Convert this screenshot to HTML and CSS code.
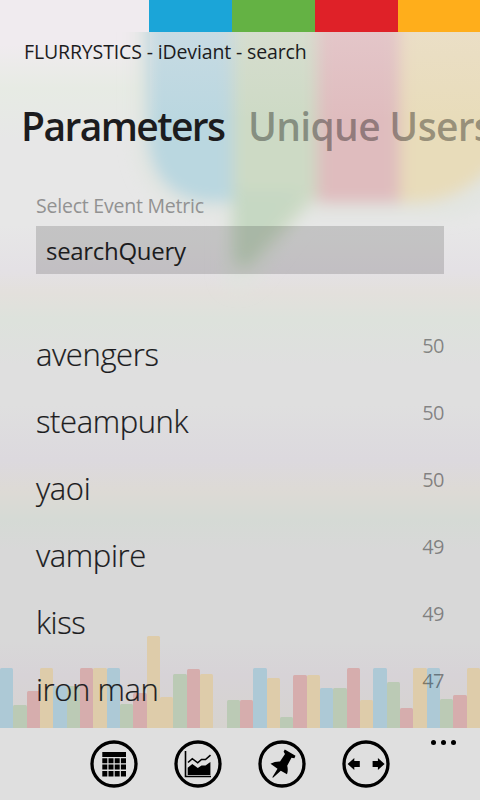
FILE: index.html
```
<!DOCTYPE html>
<html lang="en">
<head>
<meta charset="utf-8">
<title>Flurrystics</title>
<link rel="stylesheet" href="styles.css">
</head>
<body>
<div class="phone">
  <div class="stage">
    <div class="backdrop">
      <svg class="logo" viewBox="0 0 480 310" width="480" height="310" aria-hidden="true">
        <defs>
          <filter id="soft" x="-20%" y="-20%" width="140%" height="140%"><feGaussianBlur stdDeviation="7.5"/></filter>
          <linearGradient id="top" x1="0" y1="0" x2="0" y2="1"><stop offset=".4" stop-color="#f4e8ee" stop-opacity=".25"/><stop offset="1" stop-color="#f4e8ee" stop-opacity="0"/></linearGradient>
        </defs>
        <g filter="url(#soft)">
          <path d="M134 -40H530V150Q500 218 440 218H305L260 278Q236 304 222 280V214H200Q140 205 134 150Z" fill="#dfe4dd" opacity=".6"/>
          <path d="M148 -40H233V202H208Q154 196 148 140Z" fill="#bad7e0"/>
          <path d="M233 -40H317V196L252 264Q238 274 233 257Z" fill="#cddac5"/>
          <path d="M233 190H304L250 262Q238 270 233 252Z" fill="#bfd5c1" opacity=".5"/>
          <path d="M317 -40H400V203H317Z" fill="#dfbcbe"/>
          <path d="M400 -40H530V110Q485 203 412 203H400Z" fill="#e8dcba"/>
        </g>
        <path d="M150 -40H500V120H150Z" fill="url(#top)"/>
      </svg>
      <div class="bars" id="bars"></div>
    </div>
    <div class="content">
      <div class="stripes"><i></i><i class="s-blue"></i><i class="s-green"></i><i class="s-red"></i><i class="s-yellow"></i></div>
      <div class="app-title">FLURRYSTICS - iDeviant - search</div>
      <div class="pivots"><h1 class="pivot">Parameters</h1><span class="pivot next">Unique Users</span></div>
      <div class="field">
        <div class="label">Select Event Metric</div>
        <div class="select">searchQuery</div>
      </div>
      <ul class="list">
        <li><span>avengers</span><b>50</b></li>
        <li><span>steampunk</span><b>50</b></li>
        <li><span>yaoi</span><b>50</b></li>
        <li><span>vampire</span><b>49</b></li>
        <li><span>kiss</span><b>49</b></li>
        <li><span>iron man</span><b>47</b></li>
      </ul>
    </div>
  </div>
  <div class="appbar">
    <svg class="ico" viewBox="0 0 48 48"><circle cx="24" cy="24" r="22"/><path class="f" d="M12.3 12H36v5H12.3zM12.3 18.2h5v5h-5zM18.5 18.2h5v5h-5zM24.7 18.2h5v5h-5zM30.9 18.2H36v5h-5.1zM12.3 24.6h5v5h-5zM18.5 24.6h5v5h-5zM24.7 24.6h5v5h-5zM30.9 24.6H36v5h-5.1zM12.3 31h5v5.5h-5zM18.5 31h5v5.5h-5zM24.7 31h5v5.5h-5zM30.9 31H36v5.5h-5.1z"/></svg>
    <svg class="ico" viewBox="0 0 48 48"><circle cx="24" cy="24" r="22"/><path class="l" d="M11.5 11V36.5H37"/><path class="l" d="M14 22.5L18.3 18.7L23.7 22.8L27.5 19.5H31.5L36.5 15.2"/><path class="f" d="M13.7 35V27.8L18.3 24L23.8 28L27.5 25.5H31.5L36.4 22V35z"/></svg>
    <svg class="ico" viewBox="0 0 48 48"><circle cx="24" cy="24" r="22"/><path class="f" d="M26.8 9.5L37.5 15.7L36.4 18.2L33.5 17.8L29.2 25.7Q30.4 30 29 34.2L22.8 30.8L15 37.8L14.3 37.2L19.5 28.8L12.5 23.8Q17 21.3 22 21.5L27 14L25.6 11.7z"/></svg>
    <svg class="ico" viewBox="0 0 48 48"><circle cx="24" cy="24" r="22"/><path class="f" d="M5.6 24L12.3 18V21H17.8V27H12.3V30zM42.6 24L35.9 18V21H30.6V27H35.9V30z"/></svg>
    <div class="more"><i></i><i></i><i></i></div>
  </div>
</div>
<script src="bars.js"></script>
</body>
</html>
```
FILE: styles.css
```
* { box-sizing: border-box; }
body { margin: 0; font-family: "Open Sans", "Noto Sans", sans-serif; color: #1c1c1e; }
.phone { width: 480px; height: 800px; display: flex; flex-direction: column; overflow: hidden; }
.stage { height: 728px; display: grid; grid-template: 728px / 480px; overflow: hidden; }
.backdrop, .content { grid-area: 1 / 1; min-width: 0; overflow: hidden; }
.backdrop {
  display: flex; flex-direction: column; justify-content: space-between;
  background: linear-gradient(#f0ebef 0, #f0ebef 45px, #e7ebe4 88px, #e7e7e7 140px, #e7e7e7 225px, #e4e1e5 270px, #e3e0dc 293px, #dde2dc 320px, #dfdfdf 365px, #dfdfdf 405px, #dcd9de 460px, #dddad5 492px, #d5dad5 520px, #d8d8d8 550px, #d8d8d8 640px, #d7d3d7 675px, #d6d3cf 728px);
}
.logo { display: block; }
.bars { display: grid; grid-template-columns: repeat(36, 1fr); align-items: end; }
.bar { border-radius: 1.5px 1.5px 0 0; }
.blue { background: #adc9d6; }
.green { background: #bbcab5; }
.red { background: #d6adad; }
.yellow { background: #deccaa; }
.content { display: flex; flex-direction: column; z-index: 1; }
.stripes { height: 32px; flex: none; display: grid; grid-template-columns: 149px 83px 83px 83px 82px; background: #f0ebef; }
.s-blue { background: #1ba5d8; }
.s-green { background: #64b244; }
.s-red { background: #df2128; }
.s-yellow { background: #ffae1b; }
.app-title { height: 40px; padding-left: 24px; font-size: 19.5px; line-height: 40px; letter-spacing: -.14px; white-space: nowrap; }
.pivots { height: 110px; display: flex; gap: 24px; padding: 24px 0 0 21px; white-space: nowrap; }
.pivot { margin: 0; width: 203px; flex: none; font-size: 39px; line-height: 60px; font-weight: 600; letter-spacing: -.7px; }
h1.pivot { letter-spacing: -1.6px; }
.next { color: rgba(0, 0, 0, .35); }
.field { padding: 10px 36px 0; }
.label { height: 34px; font-size: 19.5px; line-height: 28px; color: #929292; letter-spacing: -.22px; }
.select { height: 48px; padding-left: 10px; background: rgba(0, 0, 0, .15); font-size: 24px; line-height: 50px; letter-spacing: -.3px; }
.list { list-style: none; margin: 46px 0 0; padding: 0 36px; }
.list li { height: 67px; display: flex; justify-content: space-between; }
.list span { font-size: 31px; font-weight: 300; line-height: 68px; letter-spacing: -.4px; white-space: nowrap; -webkit-text-stroke: .2px #1c1c1e; }
.list b { font-size: 20px; font-weight: 400; line-height: 51px; color: rgba(0, 0, 0, .42); letter-spacing: -.5px; }
.appbar { height: 72px; display: flex; gap: 36px; padding: 12px 0 0 90px; background: #dfdfdf; }
.ico { width: 48px; height: 48px; flex: none; }
.ico circle { fill: none; stroke: #000; stroke-width: 3.3; }
.f { fill: #000; }
.l { fill: none; stroke: #000; stroke-width: 1.6; }
.more { display: flex; gap: 5px; margin-left: 5px; }
.more i { width: 5px; height: 5px; border-radius: 50%; background: #000; }
```
FILE: bars.js
```
const bars = [
  ["blue", 60.5], ["green", 23], ["red", 37], ["yellow", 60.5], ["blue", 42], ["green", 42],
  ["red", 60.5], ["yellow", 60.5], ["blue", 60.5], ["green", 24], ["red", 35], ["yellow", 92],
  ["yellow", 31], ["green", 54.5], ["red", 59.5], ["yellow", 54.5], ["", 0], ["green", 28.5],
  ["red", 28.5], ["blue", 60.5], ["yellow", 50], ["green", 11.5], ["red", 53], ["yellow", 53],
  ["blue", 40], ["green", 40], ["red", 60.5], ["yellow", 28], ["blue", 60.5], ["green", 46],
  ["red", 20], ["yellow", 60.5], ["blue", 60.5], ["green", 29], ["red", 33], ["yellow", 60.5]
];
document.getElementById("bars").innerHTML = bars
  .map(([color, height]) => `<div class="bar ${color}" style="height:${height}px"></div>`)
  .join("");
```
